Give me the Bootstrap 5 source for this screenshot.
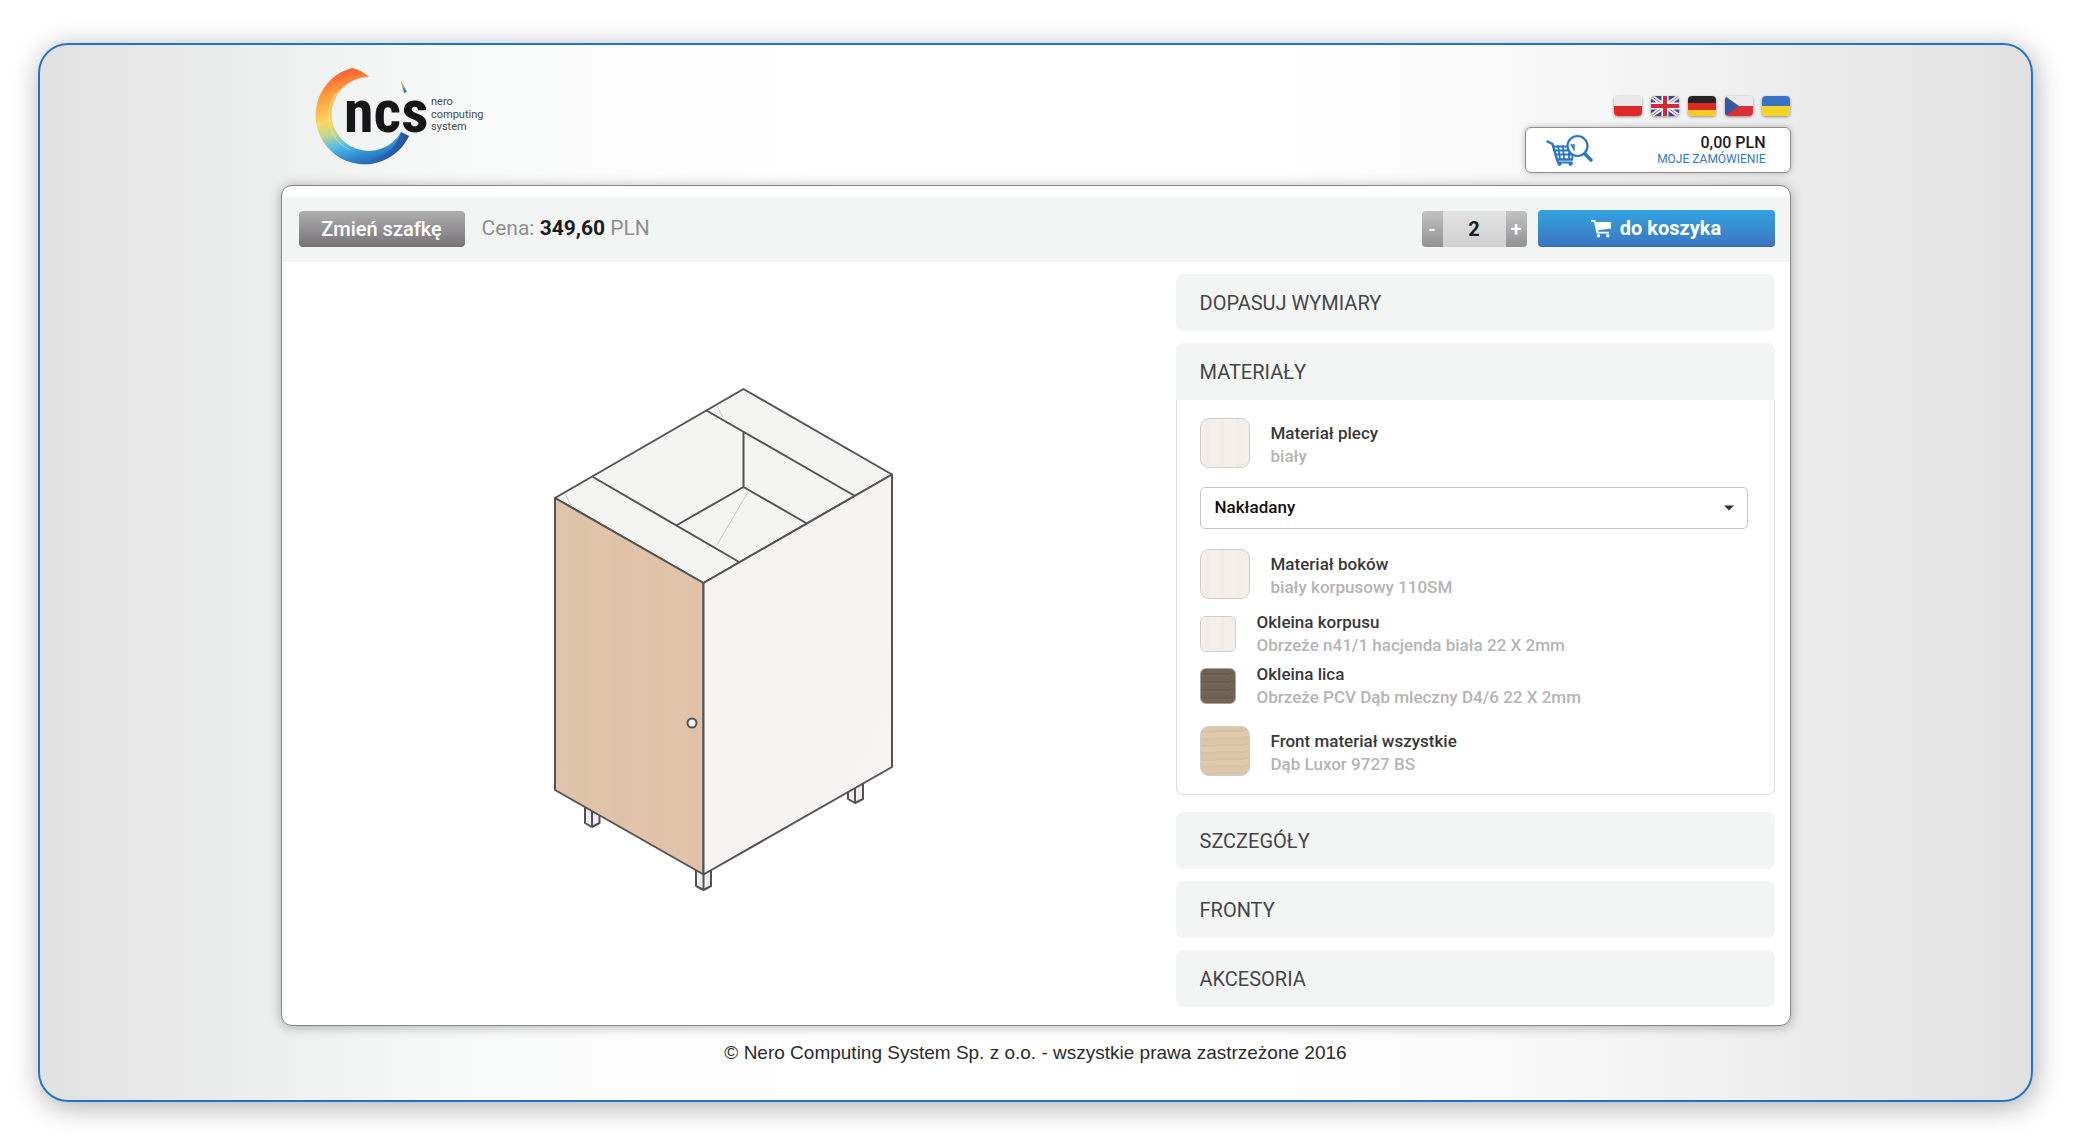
<!DOCTYPE html>
<html lang="pl">
<head>
<meta charset="utf-8">
<meta name="viewport" content="width=device-width, initial-scale=1">
<title>NCS – konfigurator szafki</title>
<link href="https://cdn.jsdelivr.net/npm/bootstrap@5.3.0/dist/css/bootstrap.min.css" rel="stylesheet">
<style>
body{font-family:Roboto,"Noto Sans",sans-serif;background:#fff;padding:43px 44px 42px 38px;color:#3f3f40}
.frame{border:2px solid #2473c2;border-radius:30px;box-shadow:2px 5px 28px rgba(0,0,0,.32);
 background:linear-gradient(90deg,#e1e1e2 0,#e7e7e8 5%,#edeeee 12%,#f6f7f7 19%,#fdfdfd 31%,#fff 40%,#fff 62%,#fbfbfb 69%,#f6f6f6 78%,#ececed 88%,#e1e1e2 100%)}
.shell{width:100%;max-width:1510px;margin:0 auto}
.topbar{height:140px;padding-left:33px}
.logo{margin-top:20px}
.side{margin-top:51px}
.flags{gap:9px;margin-bottom:11px;padding-right:1px}
.flags a{display:block;width:28px;height:20px;border-radius:4px;overflow:hidden;box-shadow:0 1px 3px rgba(0,0,0,.4)}
.flags svg{display:block}
.basket{width:266px;height:46px;background:#fff;border:1px solid #8d8d8e;border-radius:6px;padding:2px 24px 0 20px;box-shadow:0 0 6px rgba(0,0,0,.25)}
.basket b{display:block;font-size:16px;line-height:16px;font-weight:500;color:#1c1b1d}
.basket small{display:block;font-size:12px;line-height:16px;color:#2e79c3}
.panel{background:#fff;border:1px solid #87878a;border-radius:11px;padding-top:11px;box-shadow:0 1px 12px rgba(0,0,0,.3)}
.tools{background:#f3f4f4;height:65px;padding:0 15px 2px 17px;font-size:21px}
.btn-grey{width:166px;height:36px;padding:0;border:0;border-radius:4px;font-size:20px;font-weight:500;line-height:36px;color:#fff;background:linear-gradient(#b0afb0,#757376)}
.btn-grey:hover,.btn-blue:hover{color:#fff}
.price{margin-left:17px;color:#8f8f90}
.price b{font-weight:700;color:#1c1b1d}
.stepper{height:36px;width:105px;border-radius:4px;overflow:hidden;margin-right:11px;font-size:20px}
.stepper button{width:21px;border:0;padding:0;color:#fff;font-weight:500;font-size:20px;line-height:34px;background:linear-gradient(#c2c2c3,#929294)}
.stepper input{width:63px;border:0;padding:0;text-align:center;font-weight:700;color:#1c1b1d;background:linear-gradient(#e4e4e5,#cfcfd0)}
.btn-blue{width:237px;height:37px;padding:0;border:0;border-bottom:1px solid #3a62b4;border-radius:4px;font-size:20px;font-weight:700;color:#fff;background:linear-gradient(#34a3df,#3a76c1)}
.work{padding:12px 15px 18px 0}
.options{flex:0 0 599px;max-width:100%;gap:12px}
.head{display:block;width:100%;height:57px;border:0;border-radius:7px;background:#f3f4f4;text-align:left;padding:1px 24px 0;font-size:20px;color:#464648}
.head.opened{border-radius:7px 7px 0 0}
.mats{border:1px solid #dcdddd;border-top:0;border-radius:0 0 7px 7px;padding:18px 26px 18px 23px;margin-bottom:5px}
.mat{gap:21px;font-size:17px;line-height:23px;font-weight:500}
.mat span{display:block;color:#b4b4b5}
.mat strong{display:block;font-weight:500;color:#38383a}
.swatch{width:50px;height:50px;border:1px solid #cfcdcc;border-radius:9px;flex:none;padding:0;
 background:repeating-linear-gradient(90deg,#f4efe9 0 5px,#f1ebe5 5px 8px,#f3eee8 8px 15px)}
.swatch.sm{width:36px;height:36px;border-radius:6px}
.swatch.oak{background:repeating-linear-gradient(178deg,#dcc7aa 0 4px,#d8c2a3 4px 6px,#dfcaae 6px 11px,#d9c4a6 11px 14px)}
.swatch.dark{background:repeating-linear-gradient(179deg,#6f6153 0 4px,#6a5c4f 4px 6px,#736557 6px 8px);border-color:#a9a29b}
.back{height:42px;margin:19px 0 20px;border:1px solid #c6c6c7;border-radius:5px;font-size:17px;font-weight:500;color:#111;padding:0 14px;
 background-image:url("data:image/svg+xml,%3Csvg xmlns='http://www.w3.org/2000/svg' viewBox='0 0 10 6'%3E%3Cpath d='M0 .5h10L5 5.5z' fill='%23333'/%3E%3C/svg%3E");background-size:10px 6px;background-position:right 13px center}
.gap-a{margin-top:12px}.gap-b{margin-top:6px}.gap-c{margin-top:17px}
.copy{font-family:"Liberation Sans",Arial,sans-serif;font-size:19px;line-height:30px;color:#2b2a2c;padding:12px 0 32px;text-align:center}
</style>
<script src="https://cdn.jsdelivr.net/npm/bootstrap@5.3.0/dist/js/bootstrap.bundle.min.js"></script>
</head>
<body>
<div class="frame">
 <div class="shell">
  <header class="topbar d-flex justify-content-between align-items-start">
   <a class="logo" href="#" aria-label="NCS">
    <svg width="180" height="104" viewBox="313 65 180 104" style="display:block">
     <defs>
      <linearGradient id="ring" x1="350" y1="66" x2="378" y2="166" gradientUnits="userSpaceOnUse">
       <stop offset="0" stop-color="#fd5a32"/><stop offset=".2" stop-color="#fd9a3c"/><stop offset=".45" stop-color="#fbd664"/><stop offset=".58" stop-color="#c3d690"/><stop offset=".72" stop-color="#51b9e6"/><stop offset=".87" stop-color="#2a86cb"/><stop offset="1" stop-color="#2a55aa"/>
      </linearGradient>
      <linearGradient id="deep" x1="365" y1="150" x2="408" y2="140" gradientUnits="userSpaceOnUse">
       <stop offset="0" stop-color="#24439a" stop-opacity="0"/><stop offset="1" stop-color="#24439a" stop-opacity=".9"/>
      </linearGradient>
     </defs>
     <path d="M351 68A49 49 0 1 0 408 136L400 132A37 37 0 1 1 368 77Q361 70 351 68Z" fill="url(#ring)"/>
     <path d="M342 158A49 49 0 0 0 408 136L400 132A37 37 0 0 1 340 150Z" fill="url(#deep)"/>
     <path d="M333 94C319 122 333 146 352 151A37 37 0 0 1 340 90Z" fill="#fff39a" opacity=".4"/>
     <path d="M400 81L406 92L403 93Z" fill="#2a86cb"/><path d="M400 81L403 87L402 89Z" fill="#f6a23c"/>
     <text x="343" y="132" font-family="'Liberation Sans Narrow','Roboto Condensed',Roboto,sans-serif" font-weight="700" font-size="60" fill="#161517" stroke="#f3f3f4" stroke-width="5" paint-order="stroke">ncs</text>
     <g font-family="Roboto,sans-serif" font-size="11" fill="#4b4b4d"><text x="430" y="105">nero</text><text x="430" y="118">computing</text><text x="430" y="130">system</text></g>
    </svg>
   </a>
   <div class="side d-flex flex-column align-items-end">
    <nav class="flags d-flex" aria-label="Język">
     <a href="#" aria-label="Polski"><svg width="28" height="20"><path fill="#e9e9ea" d="M0 0h28v10H0z"/><path fill="#e0292b" d="M0 10h28v10H0z"/></svg></a>
     <a href="#" aria-label="English"><svg width="28" height="20"><path fill="#31489c" d="M0 0h28v20H0z"/><path d="M0 0l28 20M28 0L0 20" stroke="#fff" stroke-width="4"/><path d="M0 0l28 20M28 0L0 20" stroke="#d9434b" stroke-width="1"/><path d="M14 0v20M0 10h28" stroke="#fff" stroke-width="7"/><path d="M14 0v20M0 10h28" stroke="#d5263a" stroke-width="4"/></svg></a>
     <a href="#" aria-label="Deutsch"><svg width="28" height="20"><path fill="#272425" d="M0 0h28v7H0z"/><path fill="#dc2b22" d="M0 7h28v7H0z"/><path fill="#f5cc24" d="M0 14h28v6H0z"/></svg></a>
     <a href="#" aria-label="Čeština"><svg width="28" height="20"><path fill="#ebebed" d="M0 0h28v10H0z"/><path fill="#d93036" d="M0 10h28v10H0z"/><path fill="#35589c" d="M0 0l14 10L0 20z"/></svg></a>
     <a href="#" aria-label="Українська"><svg width="28" height="20"><path fill="#3a72c4" d="M0 0h28v10H0z"/><path fill="#f3d326" d="M0 10h28v10H0z"/></svg></a>
    </nav>
    <a class="basket d-flex justify-content-between align-items-center text-decoration-none" href="#">
     <svg width="48" height="34" viewBox="0 0 48 34" fill="none" stroke="#2877c4" stroke-linecap="round">
      <path d="M1.500 7.500l5 2.500L11 25.500h15" stroke-width="2.500"/>
      <path d="M7 12.500h14M8 16.500h14M10 20.500h18M12 12l2 13M17 12l1 13M23 19v6M27 20l-1 5" stroke-width="1.800"/>
      <path d="M11 25.500l1 3h14" stroke-width="2"/>
      <circle cx="13.500" cy="30" r="1.500" fill="#2877c4"/><circle cx="24.500" cy="30" r="1.500" fill="#2877c4"/>
      <circle cx="31.500" cy="12" r="10" fill="#fff" stroke-width="2.200"/>
      <path d="M25 11h3v5M26 12l1 2" stroke-width="1.500"/><path d="M39 20l6 6" stroke-width="3.600"/>
     </svg>
     <span class="text-end"><b>0,00 PLN</b><small>MOJE ZAMÓWIENIE</small></span>
    </a>
   </div>
  </header>

  <main class="panel">
   <div class="tools d-flex align-items-center">
    <button type="button" class="btn btn-grey">Zmień szafkę</button>
    <div class="price me-auto">Cena: <b>349,60</b> PLN</div>
    <div class="stepper d-flex">
     <button type="button" aria-label="Mniej">-</button>
     <input type="text" value="2" aria-label="Ilość">
     <button type="button" aria-label="Więcej">+</button>
    </div>
    <button type="button" class="btn btn-blue d-flex align-items-center justify-content-center gap-2">
     <svg width="21" height="19" viewBox="0 0 21 19" fill="#fff"><path d="M0 1h4.200l.6 2H20v6.500L7 11.300l.3 1.500H18v1.800H5.500L3 2.800H0z"/><circle cx="7.500" cy="16.800" r="1.700"/><circle cx="16.800" cy="16.800" r="1.700"/></svg>
     <span>do koszyka</span>
    </button>
   </div>

   <div class="work d-flex">
    <div class="flex-fill d-flex align-items-center justify-content-center">
     <svg width="360" height="520" viewBox="549 381 360 520" role="img" aria-label="Szafka" stroke="#545255" stroke-width="2" stroke-linejoin="round">
      <defs>
       <linearGradient id="wood" x1="0" x2="1" y1="0" y2="0">
        <stop offset="0" stop-color="#e1c6ad"/><stop offset=".18" stop-color="#dcc3a8"/><stop offset=".32" stop-color="#e0c4aa"/><stop offset=".42" stop-color="#ddc2a7"/><stop offset=".55" stop-color="#e2c4ac"/><stop offset=".72" stop-color="#dec3a8"/><stop offset=".86" stop-color="#e0c5ab"/><stop offset="1" stop-color="#e2c0a6"/>
       </linearGradient>
       <linearGradient id="sidewall" x1="0" x2="1" y1="0" y2="1"><stop offset="0" stop-color="#f4f3f1"/><stop offset="1" stop-color="#f6f5f4"/></linearGradient>
      </defs>
      <g fill="#eeeeef">
       <path d="M585 804v19l7 4 7.500-4v-14zM592 809v18"/>
       <path d="M696 868v18l7.500 4 7.500-4v-18zM703.500 872v18"/>
       <path d="M848 788v11l7 4 8-4v-20zM855 786v17"/>
      </g>
      <path d="M743.500 389L892 474.500 703.500 583 555 498z" fill="#f4f4f3"/>
      <path d="M555 498L703.500 583V874.500L555 790z" fill="url(#wood)"/>
      <path d="M703.500 583L892 474.500V767L703.500 874.500z" fill="url(#sidewall)"/>
      <path d="M706.500 410.500L855 496M593 477l147 85.500M743.500 432v55L677 525M743.500 487L807 523.500" fill="none"/>
      <path d="M748 492l-31 53M717 406l6 11M565 494l6 11" stroke="#c6c6c7" stroke-width="1"/>
      <circle cx="692" cy="723" r="4.500" fill="#f5f5f5"/>
     </svg>
    </div>

    <div class="options d-flex flex-column">
     <button type="button" class="head">DOPASUJ WYMIARY</button>
     <section>
      <button type="button" class="head opened" aria-expanded="true" data-bs-toggle="collapse" data-bs-target="#materials">MATERIAŁY</button>
      <div class="collapse show" id="materials">
       <div class="mats">
        <div class="mat d-flex align-items-end"><button type="button" class="swatch" aria-label="Materiał plecy"></button><div><strong>Materiał plecy</strong><span>biały</span></div></div>
        <select class="form-select back" aria-label="Materiał plecy – montaż"><option>Nakładany</option></select>
        <div class="mat d-flex align-items-end"><button type="button" class="swatch" aria-label="Materiał boków"></button><div><strong>Materiał boków</strong><span>biały korpusowy 110SM</span></div></div>
        <div class="mat gap-a d-flex align-items-center"><button type="button" class="swatch sm" aria-label="Okleina korpusu"></button><div><strong>Okleina korpusu</strong><span>Obrzeże n41/1 hacjenda biała 22 X 2mm</span></div></div>
        <div class="mat gap-b d-flex align-items-center"><button type="button" class="swatch sm dark" aria-label="Okleina lica"></button><div><strong>Okleina lica</strong><span>Obrzeże PCV Dąb mleczny D4/6 22 X 2mm</span></div></div>
        <div class="mat gap-c d-flex align-items-end"><button type="button" class="swatch oak" aria-label="Front materiał"></button><div><strong>Front materiał wszystkie</strong><span>Dąb Luxor 9727 BS</span></div></div>
       </div>
      </div>
     </section>
     <button type="button" class="head">SZCZEGÓŁY</button>
     <button type="button" class="head">FRONTY</button>
     <button type="button" class="head">AKCESORIA</button>
    </div>
   </div>
  </main>
  <footer class="copy">© Nero Computing System Sp. z o.o. - wszystkie prawa zastrzeżone 2016</footer>
 </div>
</div>
</body>
</html>
